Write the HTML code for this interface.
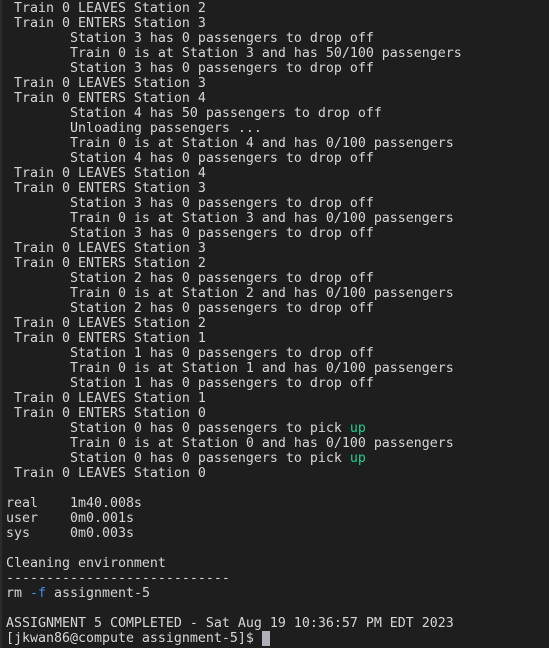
<!DOCTYPE html>
<html><head><style>
html,body{margin:0;padding:0;background:#1e1e1e;width:549px;height:648px;overflow:hidden}
body{border-left:2px solid #2c2c2c;box-sizing:border-box}
pre{margin:0;position:absolute;left:6px;top:1px;font-family:"DejaVu Sans Mono","Liberation Mono",monospace;font-size:13.29px;line-height:15px;color:#d6d6d6}
.b{color:#3b8eea}.g{color:#23d18b}
.c{display:inline-block;width:8px;height:15px;background:#b0b0b8;vertical-align:top}
</style></head><body><pre> Train 0 LEAVES Station 2
 Train 0 ENTERS Station 3
        Station 3 has 0 passengers to drop off
        Train 0 is at Station 3 and has 50/100 passengers
        Station 3 has 0 passengers to drop off
 Train 0 LEAVES Station 3
 Train 0 ENTERS Station 4
        Station 4 has 50 passengers to drop off
        Unloading passengers ...
        Train 0 is at Station 4 and has 0/100 passengers
        Station 4 has 0 passengers to drop off
 Train 0 LEAVES Station 4
 Train 0 ENTERS Station 3
        Station 3 has 0 passengers to drop off
        Train 0 is at Station 3 and has 0/100 passengers
        Station 3 has 0 passengers to drop off
 Train 0 LEAVES Station 3
 Train 0 ENTERS Station 2
        Station 2 has 0 passengers to drop off
        Train 0 is at Station 2 and has 0/100 passengers
        Station 2 has 0 passengers to drop off
 Train 0 LEAVES Station 2
 Train 0 ENTERS Station 1
        Station 1 has 0 passengers to drop off
        Train 0 is at Station 1 and has 0/100 passengers
        Station 1 has 0 passengers to drop off
 Train 0 LEAVES Station 1
 Train 0 ENTERS Station 0
        Station 0 has 0 passengers to pick <span class="g">up</span>
        Train 0 is at Station 0 and has 0/100 passengers
        Station 0 has 0 passengers to pick <span class="g">up</span>
 Train 0 LEAVES Station 0

real    1m40.008s
user    0m0.001s
sys     0m0.003s

Cleaning environment
----------------------------
rm <span class="b">-f</span> assignment-5

ASSIGNMENT 5 COMPLETED - Sat Aug 19 10:36:57 PM EDT 2023
[jkwan86@compute assignment-5]$ <span class="c"></span></pre></body></html>
